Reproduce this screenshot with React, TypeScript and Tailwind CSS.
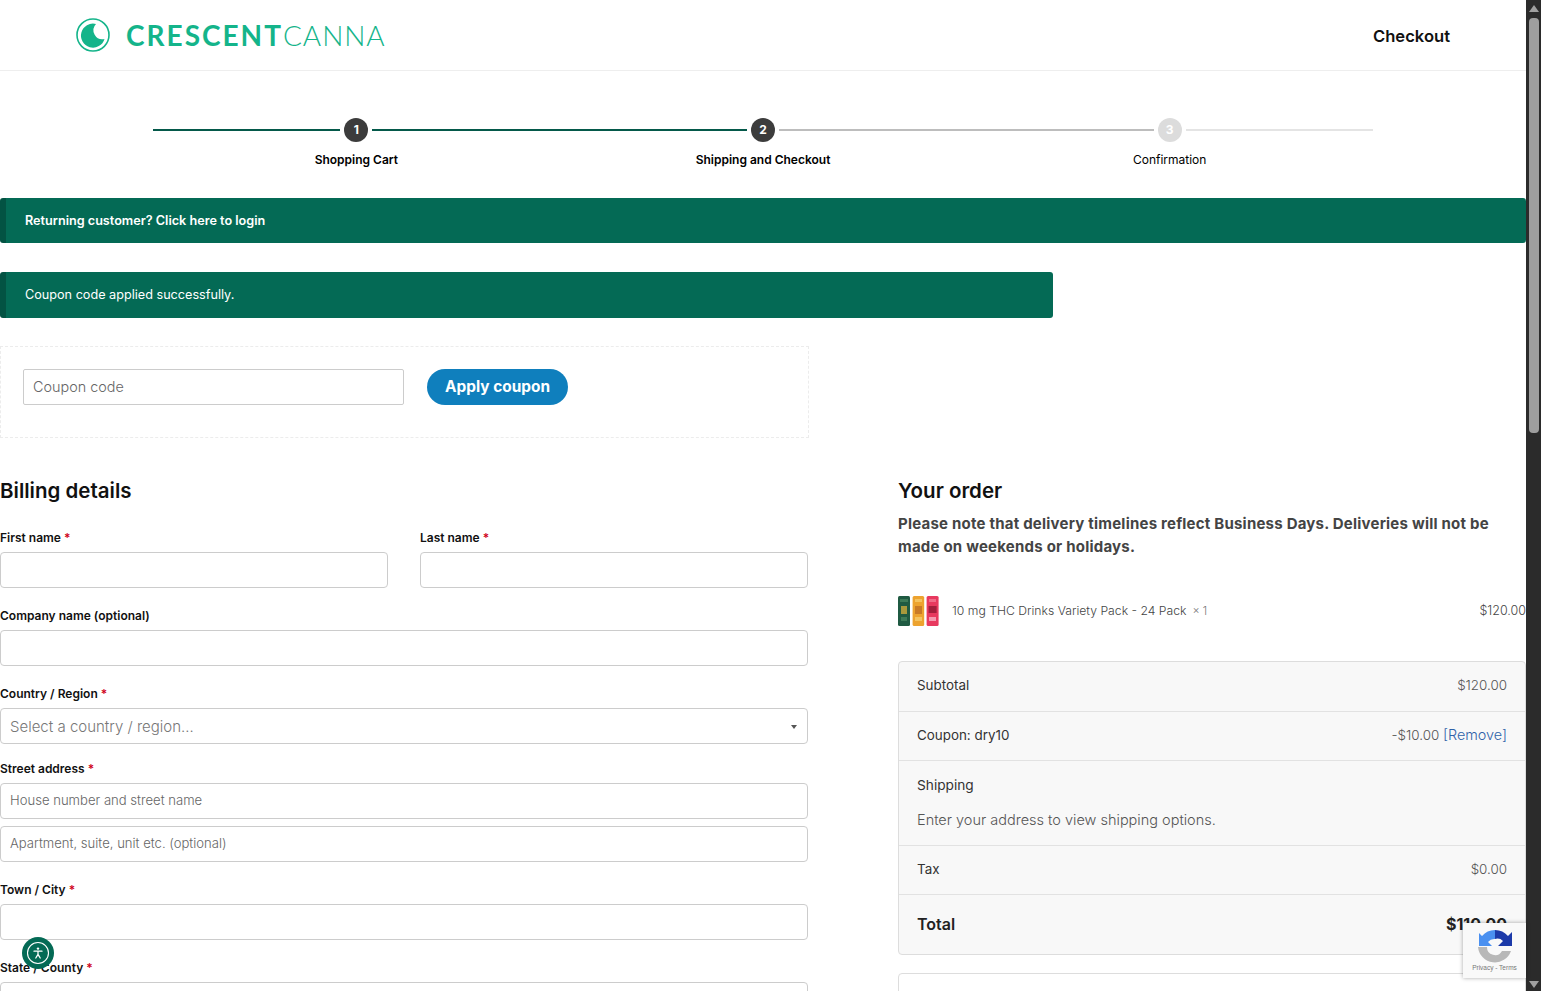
const labelFont = "font-['Inter',sans-serif]"
const bodyFont = "font-['Inter',sans-serif]"

function Step({ n, label, state }: { n: number; label: string; state: "done" | "active" | "todo" }) {
  const left = state === "todo" ? "bg-[#bdbdbd]" : "bg-[#04594a]"
  const right = state === "done" ? "bg-[#04594a]" : state === "active" ? "bg-[#bdbdbd]" : "bg-[#e4e4e4]"
  const circle = state === "todo" ? "bg-[#dcdcdc]" : "bg-[#3c3c3c]"
  return (
    <div className="flex-1 flex flex-col items-center">
      <div className="w-full flex items-center gap-1">
        <div className={`h-[2px] flex-1 ${left}`} />
        <div className={`w-6 h-6 rounded-full flex items-center justify-center text-white text-[12px] font-bold ${circle}`}>{n}</div>
        <div className={`h-[2px] flex-1 ${right}`} />
      </div>
      <div className={`mt-[8px] text-[12px] leading-[20px] text-black ${state === "todo" ? "font-normal" : "font-semibold"}`}>{label}</div>
    </div>
  )
}

function Field({ label, required, className, children }: { label: string; required?: boolean; className?: string; children?: React.ReactNode }) {
  return (
    <div className={className}>
      <div className="pt-px text-[12px] leading-[20px] font-semibold text-[#111] mb-[4px]">
        {label}
        {required && <span className="text-[#d0021b]"> *</span>}
      </div>
      {children ?? <TextBox />}
    </div>
  )
}

function TextBox({ placeholder }: { placeholder?: string }) {
  return (
    <div className={`h-9 border border-[#ccc] rounded-[4px] bg-white px-[9px] flex items-center text-[13.1px] font-light text-[#666] ${bodyFont}`}>
      {placeholder}
    </div>
  )
}

function Row({ label, value, className }: { label: string; value: React.ReactNode; className?: string }) {
  return (
    <div className={`flex items-center justify-between px-[18px] pb-[2px] border-b border-[#e2e2e2] text-[13.4px] text-[#333] ${bodyFont} ${className}`}>
      <span>{label}</span>
      <span className="text-[#555] font-light">{value}</span>
    </div>
  )
}

function Cans() {
  return (
    <svg width="42" height="32" viewBox="0 0 42 32" className="shrink-0 -mt-[1px]">
      <rect x="0" y="1" width="12" height="30" rx="1.5" fill="#1f5a42" />
      <rect x="2" y="4" width="8" height="3" fill="#3d7a58" />
      <rect x="3" y="11" width="6" height="8" fill="#a8993c" />
      <rect x="3" y="22" width="6" height="4" fill="#3d7a58" />
      <rect x="14.6" y="1" width="11.6" height="30" rx="1.5" fill="#eda32f" />
      <rect x="17" y="4" width="7" height="3" fill="#f4c35f" />
      <rect x="17" y="11" width="7" height="8" fill="#c97a26" />
      <rect x="17" y="22" width="7" height="4" fill="#f4c35f" />
      <rect x="28.6" y="1" width="12" height="30" rx="1.5" fill="#e8395f" />
      <rect x="31" y="4" width="7" height="3" fill="#f06c88" />
      <rect x="30.6" y="11" width="8" height="7" fill="#a31f3c" />
      <rect x="31" y="22" width="7" height="4" fill="#f59ab0" />
    </svg>
  )
}

function Recaptcha() {
  return (
    <div className="absolute right-[15px] top-[923px] w-[63px] h-[55px] bg-[#f9f9f9] shadow-[0_0_4px_rgba(0,0,0,0.35)] flex flex-col items-center pt-[7px]">
      <svg width="34" height="34" viewBox="0 0 34 34">
        <path d="M17 0 A17 17 0 0 0 4 6 L1 3 V16 H14 L10 12 A8 8 0 0 1 17 9 Z" fill="#4a90f0" />
        <path d="M17 0 A17 17 0 0 1 30 6 L34 2 V16 H20 L25 11 A8 8 0 0 0 17 9 Z" fill="#1c3aa9" />
        <path d="M0 17 H9 A8 8 0 0 0 24 21 L33 21 A17 17 0 0 1 0 17 Z" fill="#b8b8b8" />
      </svg>
      <div className="text-[6.5px] leading-[8px] text-[#777] font-['Liberation_Sans',sans-serif]">Privacy - Terms</div>
    </div>
  )
}

export default function App() {
  return (
    <div className={`relative h-[991px] w-[1541px] flex overflow-hidden bg-white ${labelFont}`}>
      <div className="w-[1526px] h-full overflow-hidden shrink-0">
        <header className="h-[71px] border-b border-[#eee] flex items-center justify-between pl-[76px] pr-[76px]">
          <div className="flex items-center gap-4 pb-[1px]">
            <svg width="34" height="34" viewBox="0 0 34 34" fill="none">
              <circle cx="17" cy="17" r="16" stroke="#14b48a" strokeWidth="1.6" />
              <path d="M20 6 A12 12 0 1 0 28.5 21 A9 9 0 0 1 20 6 Z" fill="#14b48a" />
            </svg>
            <div className="text-[28px] leading-none text-[#14b48a] font-['Lato',sans-serif]">
              <span className="font-bold tracking-[2px]">CRESCENT</span>
              <span className="font-light tracking-[0.95px]">CANNA</span>
            </div>
          </div>
          <div className="pt-[2px] text-[16.6px] font-semibold text-[#111]">Checkout</div>
        </header>

        <div className="pt-[47px] pl-[153px] w-[1373px]">
          <div className="flex">
            <Step n={1} label="Shopping Cart" state="done" />
            <Step n={2} label="Shipping and Checkout" state="active" />
            <Step n={3} label="Confirmation" state="todo" />
          </div>
        </div>

        <div className="mt-[28px] h-[45px] pt-px bg-[#046a55] border-l-[6px] border-[#035343] rounded-[3px] pl-[19px] flex items-center text-[12.65px] font-semibold text-white">
          Returning customer? Click here to login
        </div>
        <div className="mt-[29px] h-[46px] w-[1053px] bg-[#046a55] border-l-[6px] border-[#035343] rounded-[3px] pl-[19px] flex items-center text-[12.65px] text-white">
          Coupon code applied successfully.
        </div>

        <div className="mt-[28px] w-[809px] h-[92px] border border-dashed border-[#ececec] pl-[22px] pt-[22px] flex gap-[23px] items-start">
          <div className={`w-[381px] h-9 border border-[#ccc] rounded-[2px] px-[9px] flex items-center text-[14.4px] font-light text-[#666] ${bodyFont}`}>Coupon code</div>
          <div className="w-[141px] h-9 rounded-full bg-[#0f7fbd] text-white text-[15.4px] font-bold flex items-center justify-center">Apply coupon</div>
        </div>

        <div className="mt-[38px] flex gap-[90px]">
          <div className="w-[808px] shrink-0">
            <h2 className="text-[20.5px] leading-[30px] font-semibold text-[#111] mb-[21px]">Billing details</h2>
            <div className="flex flex-col gap-[17px]">
              <div className="flex gap-8">
                <Field label="First name" required className="flex-1" />
                <Field label="Last name" required className="flex-1" />
              </div>
              <Field label="Company name (optional)" />
              <Field label="Country / Region" required className="-mb-[3px]">
                <div className={`h-9 pt-[2px] border border-[#ccc] rounded-[4px] px-[9px] flex items-center justify-between text-[15px] font-light text-[#777] ${bodyFont}`}>
                  Select a country / region…
                  <span className="w-0 h-0 mr-[1px] border-x-[3px] border-x-transparent border-t-[4px] border-t-[#555]" />
                </div>
              </Field>
              <Field label="Street address" required>
                <TextBox placeholder="House number and street name" />
                <div className="mt-[7px]">
                  <TextBox placeholder="Apartment, suite, unit etc. (optional)" />
                </div>
              </Field>
              <Field label="Town / City" required />
              <Field label="State / County" required />
            </div>
          </div>

          <div className="flex-1 min-w-0">
            <h2 className="text-[20.5px] leading-[30px] font-semibold text-[#111]">Your order</h2>
            <p className="mt-[6px] text-[15px] leading-[23px] font-bold text-[#444] tracking-[0.22px]">
              Please note that delivery timelines reflect Business Days. Deliveries will not be made on weekends or holidays.
            </p>
            <div className={`mt-[38px] h-[32px] pb-[1px] flex items-center text-[12.2px] font-light text-[#444] ${bodyFont}`}>
              <Cans />
              <span className="ml-3">10 mg THC Drinks Variety Pack - 24 Pack</span>
              <span className="ml-[6px] text-[11px] text-[#777]">× 1</span>
              <span className="ml-auto text-[12.5px]">$120.00</span>
            </div>
            <div className="mt-[33px] border border-[#ddd] rounded-[4px] bg-[#f8f8f8] overflow-hidden">
              <Row label="Subtotal" value="$120.00" className="h-[50px]" />
              <Row
                label="Coupon: dry10"
                value={<>-$10.00 <span className="text-[14.4px] text-[#2f62a8]">[Remove]</span></>}
                className="h-[49px]"
              />
              <div className={`h-[85px] px-[18px] border-b border-[#e2e2e2] text-[13.7px] text-[#333] pt-[14px] ${bodyFont}`}>
                <div>Shipping</div>
                <div className="mt-[13px] text-[14.5px] font-light text-[#555]">Enter your address to view shipping options.</div>
              </div>
              <Row label="Tax" value="$0.00" className="h-[49px]" />
              <div className={`h-[59px] pb-[2px] px-[18px] flex items-center justify-between text-[#222] ${labelFont}`}>
                <span className="text-[16px] font-semibold">Total</span>
                <span className="text-[16px] font-bold">$110.00</span>
              </div>
            </div>
            <div className={`mt-[18px] h-[60px] border border-[#ddd] rounded-[4px] px-[18px] pt-[12px] text-[14px] text-[#333] ${bodyFont}`}>Payment</div>
          </div>
        </div>
      </div>

      <div className="w-[15px] h-full bg-[#2b2b2b] flex flex-col items-center shrink-0">
        <span className="mt-[5px] w-0 h-0 border-x-[5px] border-x-transparent border-b-[7px] border-b-[#a0a0a0]" />
        <div className="w-[10px] h-[415px] mt-[6px] rounded-[4px] bg-[#9e9e9e]" />
        <span className="mt-auto mb-[3px] w-0 h-0 border-x-[5px] border-x-transparent border-t-[7px] border-t-[#a0a0a0]" />
      </div>

      <Recaptcha />

      <div className="absolute left-[22px] top-[937px] w-8 h-8 rounded-full bg-[#046a55] flex items-center justify-center">
        <svg width="24" height="24" viewBox="0 0 24 24" fill="none" stroke="white" strokeLinecap="round">
          <circle cx="12" cy="12" r="10.5" strokeWidth="1.1" />
          <circle cx="12" cy="7.6" r="1.2" fill="white" stroke="none" />
          <path d="M8 10.2 L16 10.2 M12 10.2 V13.4 M12 13.4 L9.8 17 M12 13.4 L14.2 17" strokeWidth="1.3" />
        </svg>
      </div>
    </div>
  )
}
